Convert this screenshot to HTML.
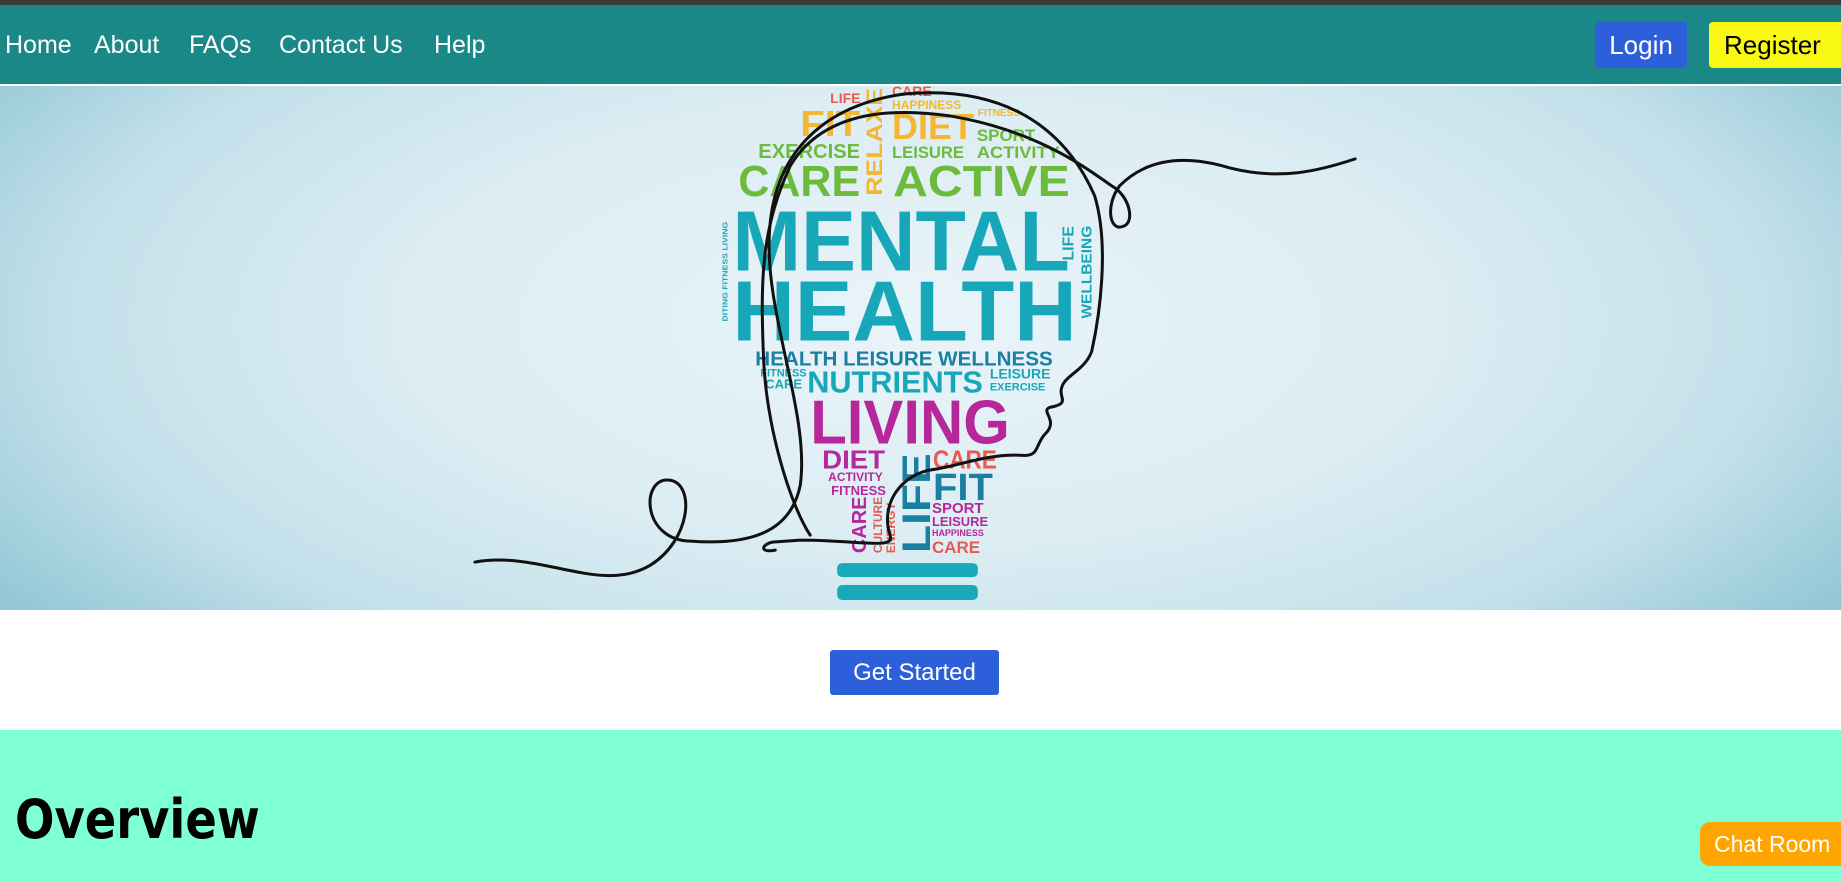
<!DOCTYPE html>
<html><head><meta charset="utf-8"><style>
*{margin:0;padding:0;box-sizing:border-box}
html,body{width:1841px;height:881px;overflow:hidden;background:#fff;font-family:"Liberation Sans",sans-serif}
.top{position:absolute;left:0;top:0;width:1841px;height:5px;background:#3a3a3a}
.nav{position:absolute;left:0;top:5px;width:1841px;height:81px;background:#1b8888;border-bottom:2px solid #fff}
.nav a{position:absolute;top:26px;color:#fff;font-size:25px;text-decoration:none}
.btn{position:absolute;top:17px;height:46px;border-radius:4px;font-size:26px;display:flex;align-items:center;justify-content:center}
.hero{position:absolute;left:0;top:86px;width:1841px;height:524px;background:radial-gradient(ellipse 62% 95% at 50% 45%,#e9f4f9 0%,#dcedf3 45%,#c3e0ea 75%,#8ec5d4 100%)}
.gs{position:absolute;left:830px;top:650px;width:169px;height:45px;background:#2c5fd9;color:#fff;font-size:24px;border-radius:3px;display:flex;align-items:center;justify-content:center}
.ov{position:absolute;left:0;top:730px;width:1841px;height:151px;background:#7fffd4}
.ov h1{position:absolute;left:15px;top:58px;font-size:54px;font-family:"DejaVu Sans",sans-serif;font-weight:bold;color:#000;transform:scaleX(0.86);transform-origin:left}
.chat{position:absolute;left:1700px;top:822px;width:150px;height:44px;background:#ffa500;color:#fff;font-size:23px;border-radius:10px;padding-left:14px;display:flex;align-items:center}
</style></head><body>
<div class="top"></div>
<div class="nav">
<a style="left:5px">Home</a><a style="left:94px">About</a><a style="left:189px">FAQs</a><a style="left:279px">Contact Us</a><a style="left:434px">Help</a>
<div class="btn" style="left:1595px;width:92px;background:#2c5fd9;color:#fff">Login</div>
<div class="btn" style="left:1709px;width:140px;background:#f8f812;color:#000;justify-content:flex-start;padding-left:15px">Register</div>
</div>
<div class="hero">
<svg width="1841" height="524" viewBox="0 0 1841 525" style="position:absolute;left:0;top:0" font-family="Liberation Sans,sans-serif" font-weight="bold">
<text x="892" y="10" font-size="14" fill="#e85a4f">CARE</text>
<text x="830" y="17" font-size="14" fill="#e85a4f">LIFE</text>
<text x="892" y="23" font-size="12" fill="#f5b731">HAPPINESS</text>
<text x="978" y="30" font-size="10" fill="#f5b731">FITNESS</text>
<text x="800" y="50" font-size="36" fill="#f5b731" textLength="60" lengthAdjust="spacingAndGlyphs">FIT</text>
<text x="892" y="53" font-size="36" fill="#f5b731" textLength="82" lengthAdjust="spacingAndGlyphs">DIET</text>
<text x="977" y="55" font-size="17" fill="#6cbb3c">SPORT</text>
<text x="758" y="72" font-size="20" fill="#6cbb3c" textLength="102" lengthAdjust="spacingAndGlyphs">EXERCISE</text>
<text x="892" y="72" font-size="17" fill="#6cbb3c" textLength="72" lengthAdjust="spacingAndGlyphs">LEISURE</text>
<text x="977" y="72" font-size="17" fill="#6cbb3c" textLength="83" lengthAdjust="spacingAndGlyphs">ACTIVITY</text>
<text x="738" y="110" font-size="44" fill="#6cbb3c" textLength="122" lengthAdjust="spacingAndGlyphs">CARE</text>
<text x="893" y="110" font-size="44" fill="#6cbb3c" textLength="177" lengthAdjust="spacingAndGlyphs">ACTIVE</text>
<text transform="translate(882,110) rotate(-90)" font-size="22" fill="#f5b731" textLength="108" lengthAdjust="spacingAndGlyphs">RELAXE</text>
<text x="732" y="185" font-size="86" fill="#18a7b9" textLength="338" lengthAdjust="spacingAndGlyphs">MENTAL</text>
<text x="732" y="255" font-size="86" fill="#18a7b9" textLength="345" lengthAdjust="spacingAndGlyphs">HEALTH</text>
<text transform="translate(1074,175) rotate(-90)" font-size="16" fill="#18a7b9">LIFE</text>
<text transform="translate(1092,233) rotate(-90)" font-size="15" fill="#18a7b9" textLength="93" lengthAdjust="spacingAndGlyphs">WELLBEING</text>
<text transform="translate(727,236) rotate(-90)" font-size="7" fill="#18a7b9" textLength="100" lengthAdjust="spacingAndGlyphs">DITING FITNESS LIVING</text>
<text x="755" y="280" font-size="20" fill="#1a7fa0" textLength="298" lengthAdjust="spacingAndGlyphs">HEALTH LEISURE WELLNESS</text>
<text x="760" y="291" font-size="11" fill="#18a7b9">FITNESS</text>
<text x="765" y="303" font-size="13" fill="#18a7b9">CARE</text>
<text x="807" y="307" font-size="31" fill="#18a7b9" textLength="176" lengthAdjust="spacingAndGlyphs">NUTRIENTS</text>
<text x="990" y="293" font-size="14" fill="#18a7b9">LEISURE</text>
<text x="990" y="305" font-size="11" fill="#18a7b9">EXERCISE</text>
<text x="810" y="358" font-size="62" fill="#b5279a" textLength="200" lengthAdjust="spacingAndGlyphs">LIVING</text>
<text x="822" y="383" font-size="26" fill="#b5279a" textLength="63" lengthAdjust="spacingAndGlyphs">DIET</text>
<text x="933" y="383" font-size="26" fill="#e85a4f" textLength="64" lengthAdjust="spacingAndGlyphs">CARE</text>
<text x="933" y="415" font-size="38" fill="#1a7fa0" textLength="60" lengthAdjust="spacingAndGlyphs">FIT</text>
<text transform="translate(930,468) rotate(-90)" font-size="40" fill="#1a7fa0" textLength="100" lengthAdjust="spacingAndGlyphs">LIFE</text>
<text x="828" y="396" font-size="12" fill="#b5279a">ACTIVITY</text>
<text x="831" y="410" font-size="13" fill="#b5279a">FITNESS</text>
<text transform="translate(866,468) rotate(-90)" font-size="20" fill="#b5279a">CARE</text>
<text transform="translate(882,468) rotate(-90)" font-size="12" fill="#e85a4f">CULTURE</text>
<text transform="translate(895,468) rotate(-90)" font-size="12" fill="#e85a4f">ENERGY</text>
<text x="932" y="428" font-size="15" fill="#b5279a">SPORT</text>
<text x="932" y="441" font-size="13" fill="#b5279a">LEISURE</text>
<text x="932" y="451" font-size="9" fill="#b5279a">HAPPINESS</text>
<text x="932" y="468" font-size="17" fill="#e85a4f">CARE</text>
<rect x="837" y="478" width="141" height="14" rx="5" fill="#1aa9b8"/>
<rect x="837" y="500" width="141" height="15" rx="5" fill="#1aa9b8"/>
<g fill="none" stroke="#111" stroke-width="3" stroke-linecap="round">
<path d="M474,477 C540,465 600,510 650,480 C690,455 695,400 670,395 C640,390 640,455 690,456 C745,460 790,450 800,400 C810,330 765,230 769,150 C772,70 820,20 904,8 C990,0 1060,30 1095,110 C1110,160 1100,230 1092,266 C1085,285 1065,290 1062,302 C1058,312 1072,318 1050,322 C1040,326 1060,335 1045,349 C1035,360 1040,372 1021,370 C990,368 960,380 935,384 C900,388 880,420 890,450 C895,465 860,455 800,455 L772,457 C760,460 760,468 775,465"/>
<path d="M810,450 C790,420 765,340 763,266 C760,190 762,140 790,80 C820,30 880,20 950,30 C1040,45 1090,85 1112,100 C1130,110 1135,135 1125,140 C1110,148 1105,120 1120,100 C1150,70 1190,70 1230,82 C1280,95 1320,85 1356,73"/>
</g>
</svg>
</div>
<div class="gs">Get Started</div>
<div class="ov"><h1>Overview</h1></div>
<div class="chat">Chat Room</div>
</body></html>
